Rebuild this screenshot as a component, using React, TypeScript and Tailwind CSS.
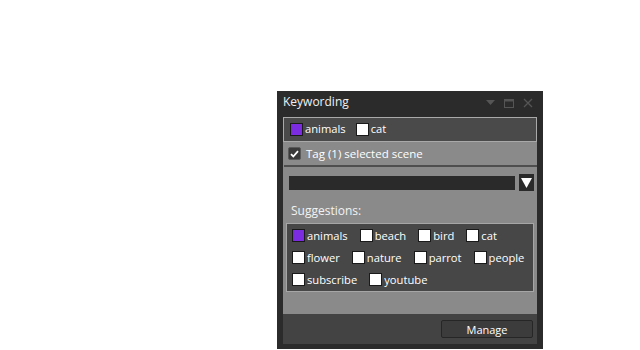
import React from 'react';

type Tag = { label: string; on?: boolean };

const Box = ({ on }: { on?: boolean }) => (
  <span
    className={`inline-block w-[13px] h-[13px] border border-[#1a1a1a] ${on ? 'bg-[#7b2be0]' : 'bg-white'}`}
  />
);

const TagItem = ({ label, on }: Tag) => (
  <span className="flex items-center gap-[2px]">
    <Box on={on} />
    <span>{label}</span>
  </span>
);

const suggestionRows: Tag[][] = [
  [{ label: 'animals', on: true }, { label: 'beach' }, { label: 'bird' }, { label: 'cat' }],
  [{ label: 'flower' }, { label: 'nature' }, { label: 'parrot' }, { label: 'people' }],
  [{ label: 'subscribe' }, { label: 'youtube' }],
];

const App = () => {
  return (
    <div
      className="w-[640px] h-[350px] bg-white pl-[277px] pt-[91px] text-[11.2px] text-white"
      style={{ fontFamily: '"Open Sans", "Noto Sans", sans-serif' }}
    >
      <div className="w-[266px] h-[258px] bg-[#2b2b2b] flex flex-col px-[6px]">
        {/* title bar */}
        <div className="h-[26px] flex items-start pt-[2px] justify-between">
          <span className="text-[12px] text-[#f0f0f0]">Keywording</span>
          <div className="flex items-center gap-[9px] pt-[5px] pr-[4px]">
            <svg width="9" height="6" viewBox="0 0 9 6">
              <path d="M0 0h9L4.5 5z" fill="#555" />
            </svg>
            <svg width="10" height="9" viewBox="0 0 10 9">
              <rect x="0.5" y="0.5" width="9" height="8" fill="none" stroke="#555" />
              <rect x="0.5" y="0.5" width="9" height="2" fill="#555" />
            </svg>
            <svg width="10" height="10" viewBox="0 0 10 10">
              <path d="M1 1l8 8M9 1l-8 8" stroke="#555" strokeWidth="1.3" />
            </svg>
          </div>
        </div>

        {/* gray content */}
        <div className="h-[197px] bg-[#8a8a8a] flex flex-col">
          <div className="h-[25px] bg-[#4a4a4a] border border-[#a9a9a9] flex items-center gap-[10px] pl-[6px]">
            <TagItem label="animals" on />
            <TagItem label="cat" />
          </div>
          <div className="h-[23px] flex items-center gap-[5px] pl-[5px]">
            <span className="w-[13px] h-[13px] rounded-[2px] bg-[#3a3a3a] border border-[#5a5a5a] flex items-center justify-center">
              <svg width="9" height="8" viewBox="0 0 9 8">
                <path d="M1 4.2l2.3 2.3L8 1.2" stroke="white" strokeWidth="1.8" fill="none" />
              </svg>
            </span>
            <span className="text-[11.5px]">Tag (1) selected scene</span>
          </div>
          <div className="h-[2px] bg-[#4e4e4e] ml-[1px]" />
          <div className="flex items-center gap-[4px] pl-[6px] pt-[7px]">
            <div className="w-[226px] h-[14px] bg-[#2a2a2a]" />
            <div className="w-[15px] h-[17px] bg-[#2a2a2a] flex items-center justify-center">
              <svg width="11" height="10" viewBox="0 0 11 10">
                <path d="M0 0h11L5.5 10z" fill="white" />
              </svg>
            </div>
          </div>
          <div className="pl-[8px] pt-[11px] h-[32px] text-[12px] text-[#f2f2f2]">Suggestions:</div>
          <div className="mx-[3px] h-[69px] bg-[#474747] border border-[#a6a6a6] flex flex-col pl-[5px] pt-[1px]">
            {suggestionRows.map((row, i) => (
              <div key={i} className="h-[22px] flex items-center gap-[12px]">
                {row.map((t) => (
                  <TagItem key={t.label} {...t} />
                ))}
              </div>
            ))}
          </div>
        </div>

        {/* bottom bar */}
        <div className="h-[30px] bg-[#434343] flex items-center justify-end pr-[4px]">
          <button className="w-[92px] h-[18px] bg-[#3c3c3c] border border-[#262626] rounded-[2px] text-[11px] text-white leading-none">
            Manage
          </button>
        </div>
      </div>
    </div>
  );
};

export default App;
